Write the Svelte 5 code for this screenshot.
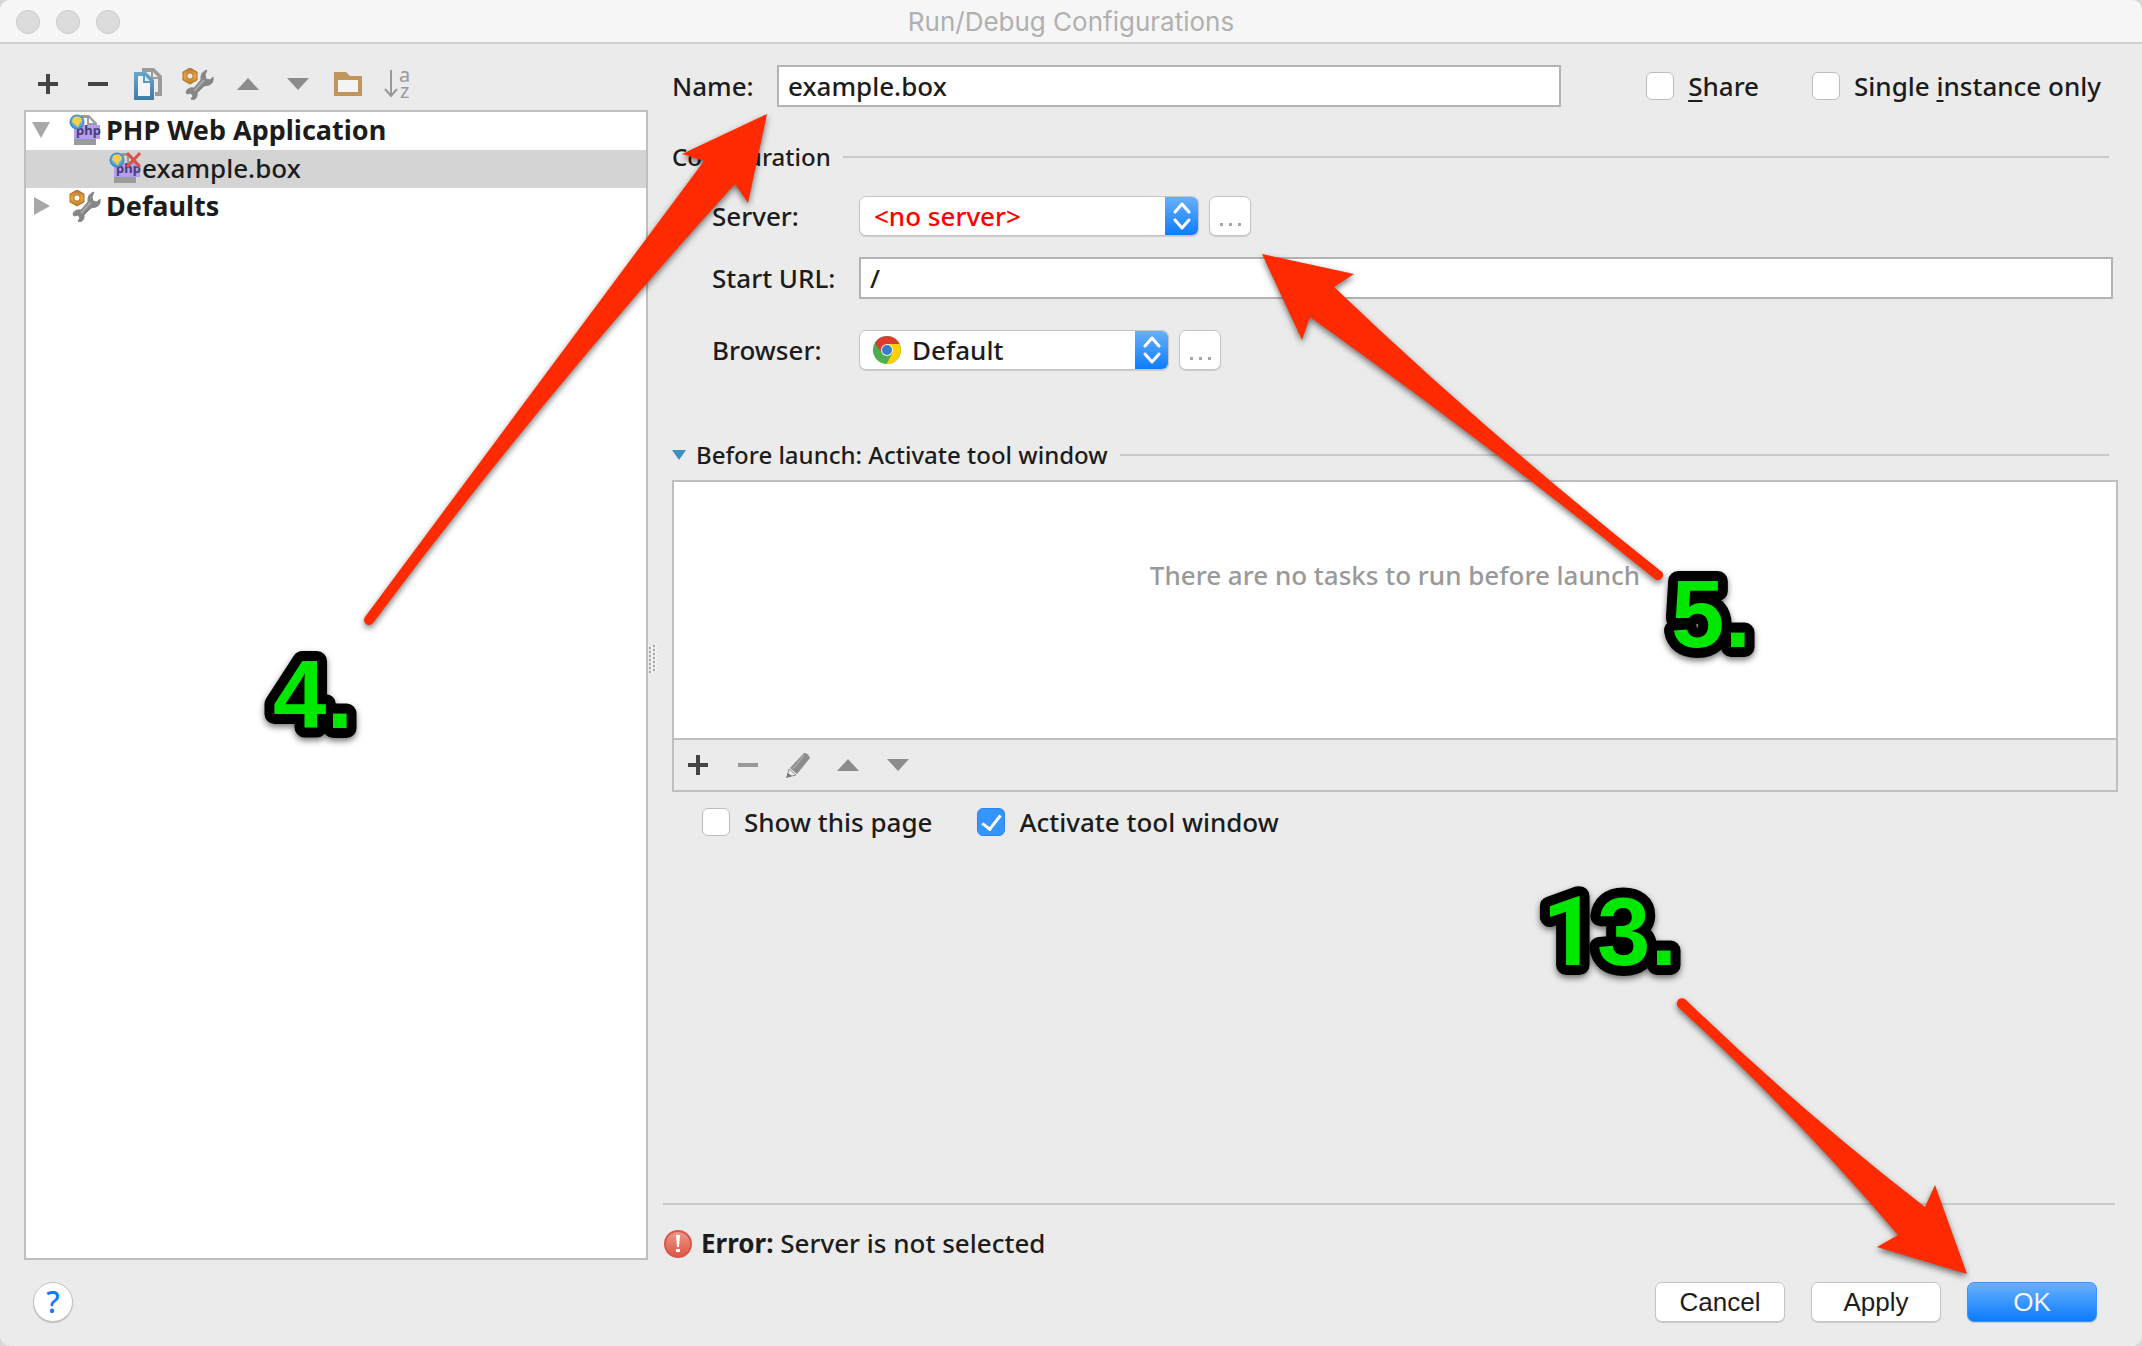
<script>
  let name = $state('example.box');
  let url = $state('/');
  let share = $state(false);
  let single = $state(false);
  let showPage = $state(false);
  let activate = $state(true);
</script>

{#snippet plus()}
  <svg width="32" height="32" viewBox="0 0 32 32" aria-hidden="true"><path d="M14 6h4v8h8v4h-8v8h-4v-8H6v-4h8z" fill="#444" /></svg>
{/snippet}
{#snippet minus(color)}
  <svg width="32" height="32" viewBox="0 0 32 32" aria-hidden="true"><path d="M6 14h20v4H6z" fill={color} /></svg>
{/snippet}
{#snippet up()}
  <svg width="32" height="32" viewBox="0 0 32 32" aria-hidden="true"><path d="M16 10 27 22H5z" fill="#8c8c8c" /></svg>
{/snippet}
{#snippet down()}
  <svg width="32" height="32" viewBox="0 0 32 32" aria-hidden="true"><path d="M16 22 27 10H5z" fill="#8c8c8c" /></svg>
{/snippet}
{#snippet tools()}
  <svg width="32" height="32" viewBox="0 0 32 32" aria-hidden="true">
    <defs>
      <linearGradient id="nut" x1="0" y1="0" x2="0" y2="1"><stop offset="0" stop-color="#b86f33" /><stop offset=".5" stop-color="#efa93a" /><stop offset="1" stop-color="#b97a2a" /></linearGradient>
    </defs>
    <path d="M25 2 23 7l1 4 4 1 3-3q1 6-4 8l-5 1-7 7q1 5-4 7l-2-1 2-3-2-3-4 1-1-2q2-5 8-4l7-8q-1-8 6-10z" fill="#868686" stroke="#868686" stroke-width="1" stroke-linejoin="round" />
    <path d="M12 23 22 12" stroke="#a6a6a6" stroke-width="2" />
    <path fill-rule="evenodd" d="M8 0l7 4v8l-7 4-7-4V4zM8 4.800a3.200 3.200 0 1 0 0 6.400 3.200 3.200 0 0 0 0-6.400z" fill="url(#nut)" stroke="#a8702c" stroke-width="1" />
  </svg>
{/snippet}
{#snippet php(broken)}
  <svg width="32" height="32" viewBox="0 0 32 32" aria-hidden="true">
    <defs>
      <radialGradient id="sea" cx=".5" cy=".45" r=".6"><stop offset="0" stop-color="#b8e0f5" /><stop offset="1" stop-color="#2b7fc4" /></radialGradient>
    </defs>
    <path fill-rule="evenodd" d="M12 1h8l8 8v6h-2v-4h-8V4H12zM20 4v5h4.500z" fill="#9b9b9b" />
    <path d="M5 25h22v6H5z" fill="#9b9b9b" />
    <path d="M5 11h26v14H5z" fill="#b49cf7" />
    <text x="7" y="21" class="php">php</text>
    <circle cx="8" cy="8" r="7" fill="url(#sea)" stroke="#3b85c0" stroke-width="1" />
    <path d="M4 4q4-3 8 0l1 3-3 3-1 4-3-4-3-2z" fill="#f3cf4a" />
    {#if broken}
      <path d="M18 1l13 14M31 1 18 15" stroke="#d9534a" stroke-width="3" />
    {/if}
  </svg>
{/snippet}
{#snippet updown()}
  <span class="cap" aria-hidden="true">
    <svg width="33" height="40" viewBox="0 0 33 40"><path d="M10 16l7-8 7 8M10 24l7 8 7-8" fill="none" stroke="#fff" stroke-width="3" stroke-linecap="round" stroke-linejoin="round" /></svg>
  </span>
{/snippet}

<main class="window">
  <header class="titlebar">
    <div class="lights"><i></i><i></i><i></i></div>
    <h1>Run/Debug Configurations</h1>
  </header>

  <div class="content">
    <section class="left">
      <div class="toolbar">
        <button aria-label="Add">{@render plus()}</button>
        <button aria-label="Remove">{@render minus('#444')}</button>
        <button aria-label="Copy">
          <svg width="32" height="32" viewBox="0 0 32 32" aria-hidden="true">
            <defs><linearGradient id="doc" x1="0" y1="0" x2="0" y2="1"><stop offset="0" stop-color="#6aa7cc" /><stop offset="1" stop-color="#3f7ba5" /></linearGradient></defs>
            <path fill-rule="evenodd" d="M10 0h12l8 8v20h-7v-4h3V11h-7V4H10zM21 4v5h5z" fill="#9b9b9b" />
            <path fill-rule="evenodd" d="M2 4h12l8 8v20H2zM6 8v20h12V15h-7V8zM13 8v5h5z" fill="url(#doc)" />
            <path d="M6 8h5v7h7v13H6z" fill="#f4f4f4" />
          </svg>
        </button>
        <button aria-label="Edit defaults">{@render tools()}</button>
        <button aria-label="Move up">{@render up()}</button>
        <button aria-label="Move down">{@render down()}</button>
        <button aria-label="Create folder">
          <svg width="32" height="32" viewBox="0 0 32 32" aria-hidden="true"><path fill-rule="evenodd" d="M2 4h12l4 4h12v20H2zM6 12v12h20V12z" fill="#c0965c" /><path d="M6 12h20v12H6z" fill="#f4f4f4" /></svg>
        </button>
        <button aria-label="Sort">
          <svg class="sort" width="32" height="32" viewBox="0 0 32 32" aria-hidden="true"><path d="M9 2v26M3 21l6 7 6-7" fill="none" stroke="#999" stroke-width="2" /><text x="17" y="14" class="az">a</text><text x="18" y="30" class="az">z</text></svg>
        </button>
      </div>
      <ul class="tree">
        <li class="group">
          <svg class="twist" width="20" height="20" viewBox="0 0 20 20" aria-hidden="true"><path d="M1 2h18l-9 16z" fill="#a8a8a8" /></svg>
          {@render php(false)}<span>PHP Web Application</span>
        </li>
        <li class="leaf">{@render php(true)}<span>example.box</span></li>
        <li class="group">
          <svg class="twist" width="20" height="20" viewBox="0 0 20 20" aria-hidden="true"><path d="M3 1v18l16-9z" fill="#a8a8a8" /></svg>
          {@render tools()}<span>Defaults</span>
        </li>
      </ul>
    </section>

    <div class="grip" aria-hidden="true"><svg width="10" height="32" viewBox="0 0 10 32"><path d="M2 4v28M6 2v28" stroke="#a6a6a6" stroke-width="2" stroke-dasharray="2 2" /><path d="M4 4v28M8 2v28" stroke="#fafafa" stroke-width="2" stroke-dasharray="2 2" /></svg></div>

    <section class="right">
      <div class="namerow">
        <label for="name">Name:</label>
        <input id="name" class="field" type="text" bind:value={name} />
        <label class="check"><input type="checkbox" bind:checked={share} /><span><u>S</u>hare</span></label>
        <label class="check"><input type="checkbox" bind:checked={single} /><span>Single <u>i</u>nstance only</span></label>
      </div>

      <h2 class="rule config">Configuration</h2>

      <div class="form">
        <label for="server">Server:</label>
        <div class="line">
          <div class="combo server">
            <select id="server"><option>&lt;no server&gt;</option></select>
            {@render updown()}
          </div>
          <button class="more" aria-label="Choose server"><i></i><i></i><i></i></button>
        </div>
        <label for="url">Start URL:</label>
        <input id="url" class="field" type="text" bind:value={url} />
        <label class="gap" for="browser">Browser:</label>
        <div class="line gap">
          <div class="combo browser">
            <svg class="chrome" width="30" height="30" viewBox="0 0 30 30" aria-hidden="true">
              <circle cx="15" cy="15" r="14" fill="#4bae4f" />
              <path d="M15 15 2.900 8A14 14 0 0 1 27.500 9H15z" fill="#dd3b2f" />
              <path d="M15 9h12.500A14 14 0 0 1 14.500 29l6-11z" fill="#fdd003" />
              <path d="M2.900 8 10 18l5-9z" fill="#dd3b2f" />
              <circle cx="15" cy="15" r="6" fill="#f2f2f2" />
              <circle cx="15" cy="15" r="5" fill="#3a7bc8" />
            </svg>
            <select id="browser"><option>Default</option></select>
            {@render updown()}
          </div>
          <button class="more" aria-label="Choose browser"><i></i><i></i><i></i></button>
        </div>
      </div>

      <h2 class="rule launch">
        <svg width="14" height="10" viewBox="0 0 14 10" aria-hidden="true"><path d="M0 0h14L7 10z" fill="#3d8fc4" /></svg>
        Before launch: Activate tool window
      </h2>

      <div class="tasks">
        <div class="empty">There are no tasks to run before launch</div>
        <div class="toolbar">
          <button aria-label="Add task">{@render plus()}</button>
          <button aria-label="Remove task">{@render minus('#999')}</button>
          <button aria-label="Edit task">
            <svg width="32" height="32" viewBox="0 0 32 32" aria-hidden="true"><path d="M22 4q4 0 6 5L15 25 8 19z" fill="#8c8c8c" /><path d="M22 6 11 20" stroke="#a4a4a4" stroke-width="2" /><path d="M7 20l7 6-9 2z" fill="#eee" stroke="#8c8c8c" stroke-width="1" /><path d="M4 29l2-5 4 3z" fill="#777" /></svg>
          </button>
          <button aria-label="Move task up">{@render up()}</button>
          <button aria-label="Move task down">{@render down()}</button>
        </div>
      </div>

      <div class="options">
        <label class="check"><input type="checkbox" bind:checked={showPage} /><span>Show this page</span></label>
        <label class="check"><input type="checkbox" bind:checked={activate} /><span>Activate tool window</span></label>
      </div>

      <div class="error">
        <svg width="30" height="30" viewBox="0 0 30 30" aria-hidden="true">
          <defs><linearGradient id="err" x1="0" y1="0" x2="0" y2="1"><stop offset="0" stop-color="#ee9a8c" /><stop offset="1" stop-color="#dd5442" /></linearGradient></defs>
          <circle cx="15" cy="15" r="13" fill="url(#err)" stroke="#d9584a" stroke-width="2" />
          <path d="M13 6h4l-1 12h-2zM13 20h4v3h-4z" fill="#fff" />
        </svg>
        <p><b>Error:</b> Server is not selected</p>
      </div>
    </section>
  </div>

  <footer>
    <button class="help" aria-label="Help">?</button>
    <div class="actions">
      <button class="push">Cancel</button>
      <button class="push">Apply</button>
      <button class="push ok">OK</button>
    </div>
  </footer>

  <svg class="notes" viewBox="0 0 2142 1346" aria-hidden="true">
    <g class="arrows">
      <path d="M365 617 704 161 682 154 767 114 748 203 735 184Q544 394 373 623A5 5 0 0 1 365 617z" />
      <path d="M1262 254l92 20-20 13Q1490 436 1662 572A5 5 0 0 1 1655 579Q1488 444 1310 317L1302 340z" />
      <path d="M1678 1007Q1797 1116 1898 1235L1877 1247 1967 1274 1935 1185 1925 1207Q1800 1110 1686 1000A5 5 0 0 0 1678 1007z" />
    </g>
    <g class="numbers">
      <text x="273" y="728">4.</text>
      <text x="1671" y="647">5.</text>
      <text x="1542" y="965"><tspan class="one">1</tspan>3.</text>
    </g>
  </svg>
</main>

<style>
  :global(body) { background: #d8d8d8; }
  * { box-sizing: border-box; margin: 0; }
  .window {
    position: relative;
    display: flex;
    flex-direction: column;
    min-height: 100vh;
    overflow: hidden;
    border-radius: 10px;
    background: #ebebeb;
    color: #1c1c1c;
    font: 500 26px/38px "Noto Sans", "Open Sans", sans-serif;
  }
  svg { display: block; flex: none; }
  button, input, select { font: inherit; color: inherit; }
  button { border: 0; padding: 0; background: none; }

  .titlebar {
    display: grid;
    grid-template-columns: 1fr auto 1fr;
    align-items: center;
    height: 44px;
    padding: 2px 16px 0;
    background: #f6f6f6;
    border-bottom: 2px solid #d0d0d0;
  }
  .lights { display: flex; gap: 16px; }
  .lights i { width: 24px; height: 24px; border-radius: 50%; background: #dcdcdc; border: 1px solid #c9c9c9; }
  h1 { font: 26px/40px Inter, sans-serif; color: #b0b0b0; }

  .content { display: flex; flex: 1; padding: 21px 24px 0; }
  .left { display: flex; flex-direction: column; flex: 0 0 624px; }
  .toolbar { display: flex; gap: 18px; padding: 3px 8px; }
  .tree {
    flex: 1;
    margin-top: 7px;
    padding: 0;
    list-style: none;
    background: #fff;
    border: 2px solid #bfbfbf;
  }
  .tree li { display: flex; align-items: center; height: 38px; padding-bottom: 2px; }
  .group { padding-left: 5px; gap: 5px; font-size: 27px; font-weight: bold; }
  .twist { margin-right: 13px; }
  .leaf { padding-left: 83px; gap: 1px; background: #d4d4d4; }
  .php { font: bold 13px "Noto Sans", sans-serif; fill: #4a3f6b; }
  .az { font: 20px "Noto Sans", sans-serif; fill: #999; }
  .sort { overflow: visible; }

  .grip { display: flex; align-items: center; width: 24px; padding-bottom: 8px; }

  .right { display: flex; flex-direction: column; flex: 1; min-width: 0; }
  .namerow { display: flex; align-items: center; height: 42px; }
  .namerow > label:first-child { width: 105px; }
  .field {
    width: 100%;
    height: 42px;
    padding: 0 9px;
    border: 2px solid #b3b3b3;
    border-radius: 0;
    background: #fff;
    outline: 0;
  }
  .namerow .field { flex: 1; margin-right: 85px; }
  .check { display: flex; align-items: center; gap: 14px; white-space: nowrap; }
  .namerow .check:last-child { margin: 0 17px 0 53px; }
  .check input {
    appearance: none;
    display: grid;
    place-items: center;
    width: 28px;
    height: 28px;
    margin: 0;
    border: 1px solid #bdbdbd;
    border-radius: 6px;
    background: #fff;
  }
  .check input:checked { background: #3395fd; border-color: #2a86ec; }
  .check input:checked::after {
    content: "";
    width: 8px;
    height: 16px;
    margin-bottom: 4px;
    border: solid #fff;
    border-width: 0 3px 3px 0;
    transform: rotate(38deg);
  }
  u { text-underline-offset: 4px; text-decoration-thickness: 2px; }

  .rule { display: flex; align-items: center; font-size: 24px; font-weight: inherit; line-height: 36px; }
  .rule::after { content: ""; flex: 1; height: 2px; margin-left: 12px; background: #cacaca; }
  .config { margin: 32px 9px 21px 0; }
  .launch { margin: 67px 9px 7px 0; }
  .launch svg { margin-right: 10px; }

  .form {
    display: grid;
    grid-template-columns: 147px 1fr;
    row-gap: 21px;
    align-items: center;
    padding: 0 5px 0 40px;
  }
  .gap { margin-top: 10px; }
  .line { display: flex; align-items: center; gap: 10px; }
  .combo {
    display: flex;
    height: 40px;
    border: 1px solid #c4c4c4;
    border-radius: 7px;
    background: #fff;
    overflow: hidden;
    align-items: center;
    box-shadow: 0 1px 1px #0002;
  }
  .server { width: 340px; color: #f00; }
  .browser { width: 310px; }
  .combo select { appearance: none; flex: 1; min-width: 0; padding: 0 14px; border: 0; background: none; height: 38px; outline: 0; }
  .browser select { padding: 0 10px; }
  .chrome { margin-left: 12px; }
  .cap { flex: none; background: linear-gradient(#69b1fb, #0a7bff); }
  .more {
    display: flex;
    justify-content: center;
    align-items: flex-end;
    gap: 6px;
    width: 42px;
    height: 40px;
    padding-bottom: 9px;
    border: 1px solid #c4c4c4;
    border-radius: 7px;
    background: #fff;
    box-shadow: 0 1px 1px #0002;
  }
  .more i { width: 3px; height: 3px; background: #a6a6a6; }

  .tasks { border: 2px solid #bfbfbf; }
  .empty {
    height: 258px;
    padding-top: 74px;
    background: #fff;
    border-bottom: 2px solid #bfbfbf;
    color: #999;
    text-align: center;
  }
  .tasks .toolbar { height: 50px; padding: 8px; }
  .options { display: flex; gap: 45px; padding: 11px 30px; }

  .error {
    display: flex;
    align-items: center;
    gap: 8px;
    margin: auto 3px 0 -9px;
    padding-top: 22px;
    border-top: 2px solid #cacaca;
    line-height: 33px;
  }

  footer { display: flex; justify-content: space-between; align-items: center; padding: 22px 45px 24px 33px; }
  .help {
    width: 40px;
    height: 40px;
    border: 1px solid #c4c4c4;
    border-radius: 50%;
    background: #fff;
    box-shadow: 0 1px 1px #0003;
    color: #0a7bff;
    font-size: 30px;
    line-height: 36px;
  }
  .actions { display: flex; gap: 26px; }
  .push {
    width: 130px;
    height: 40px;
    border: 1px solid #c4c4c4;
    border-radius: 7px;
    background: #fff;
    box-shadow: 0 1px 1px #0002;
    font: 26px "Liberation Sans", sans-serif;
  }
  .ok { background: linear-gradient(#69b1fb, #0a7bff); border-color: #3d93f2; color: #f4f4f4; }

  .notes { position: absolute; top: 0; left: 0; width: 100%; pointer-events: none; }
  .arrows, .numbers { filter: drop-shadow(0 3px 3px #0008); }
  .arrows { fill: #ff2a00; }
  .numbers {
    font: bold 96px "Liberation Sans", sans-serif;
    fill: #00e800;
    stroke: #000;
    stroke-width: 20px;
    stroke-linejoin: round;
    paint-order: stroke;
  }
  .one { font-family: Roboto, sans-serif; }
</style>
